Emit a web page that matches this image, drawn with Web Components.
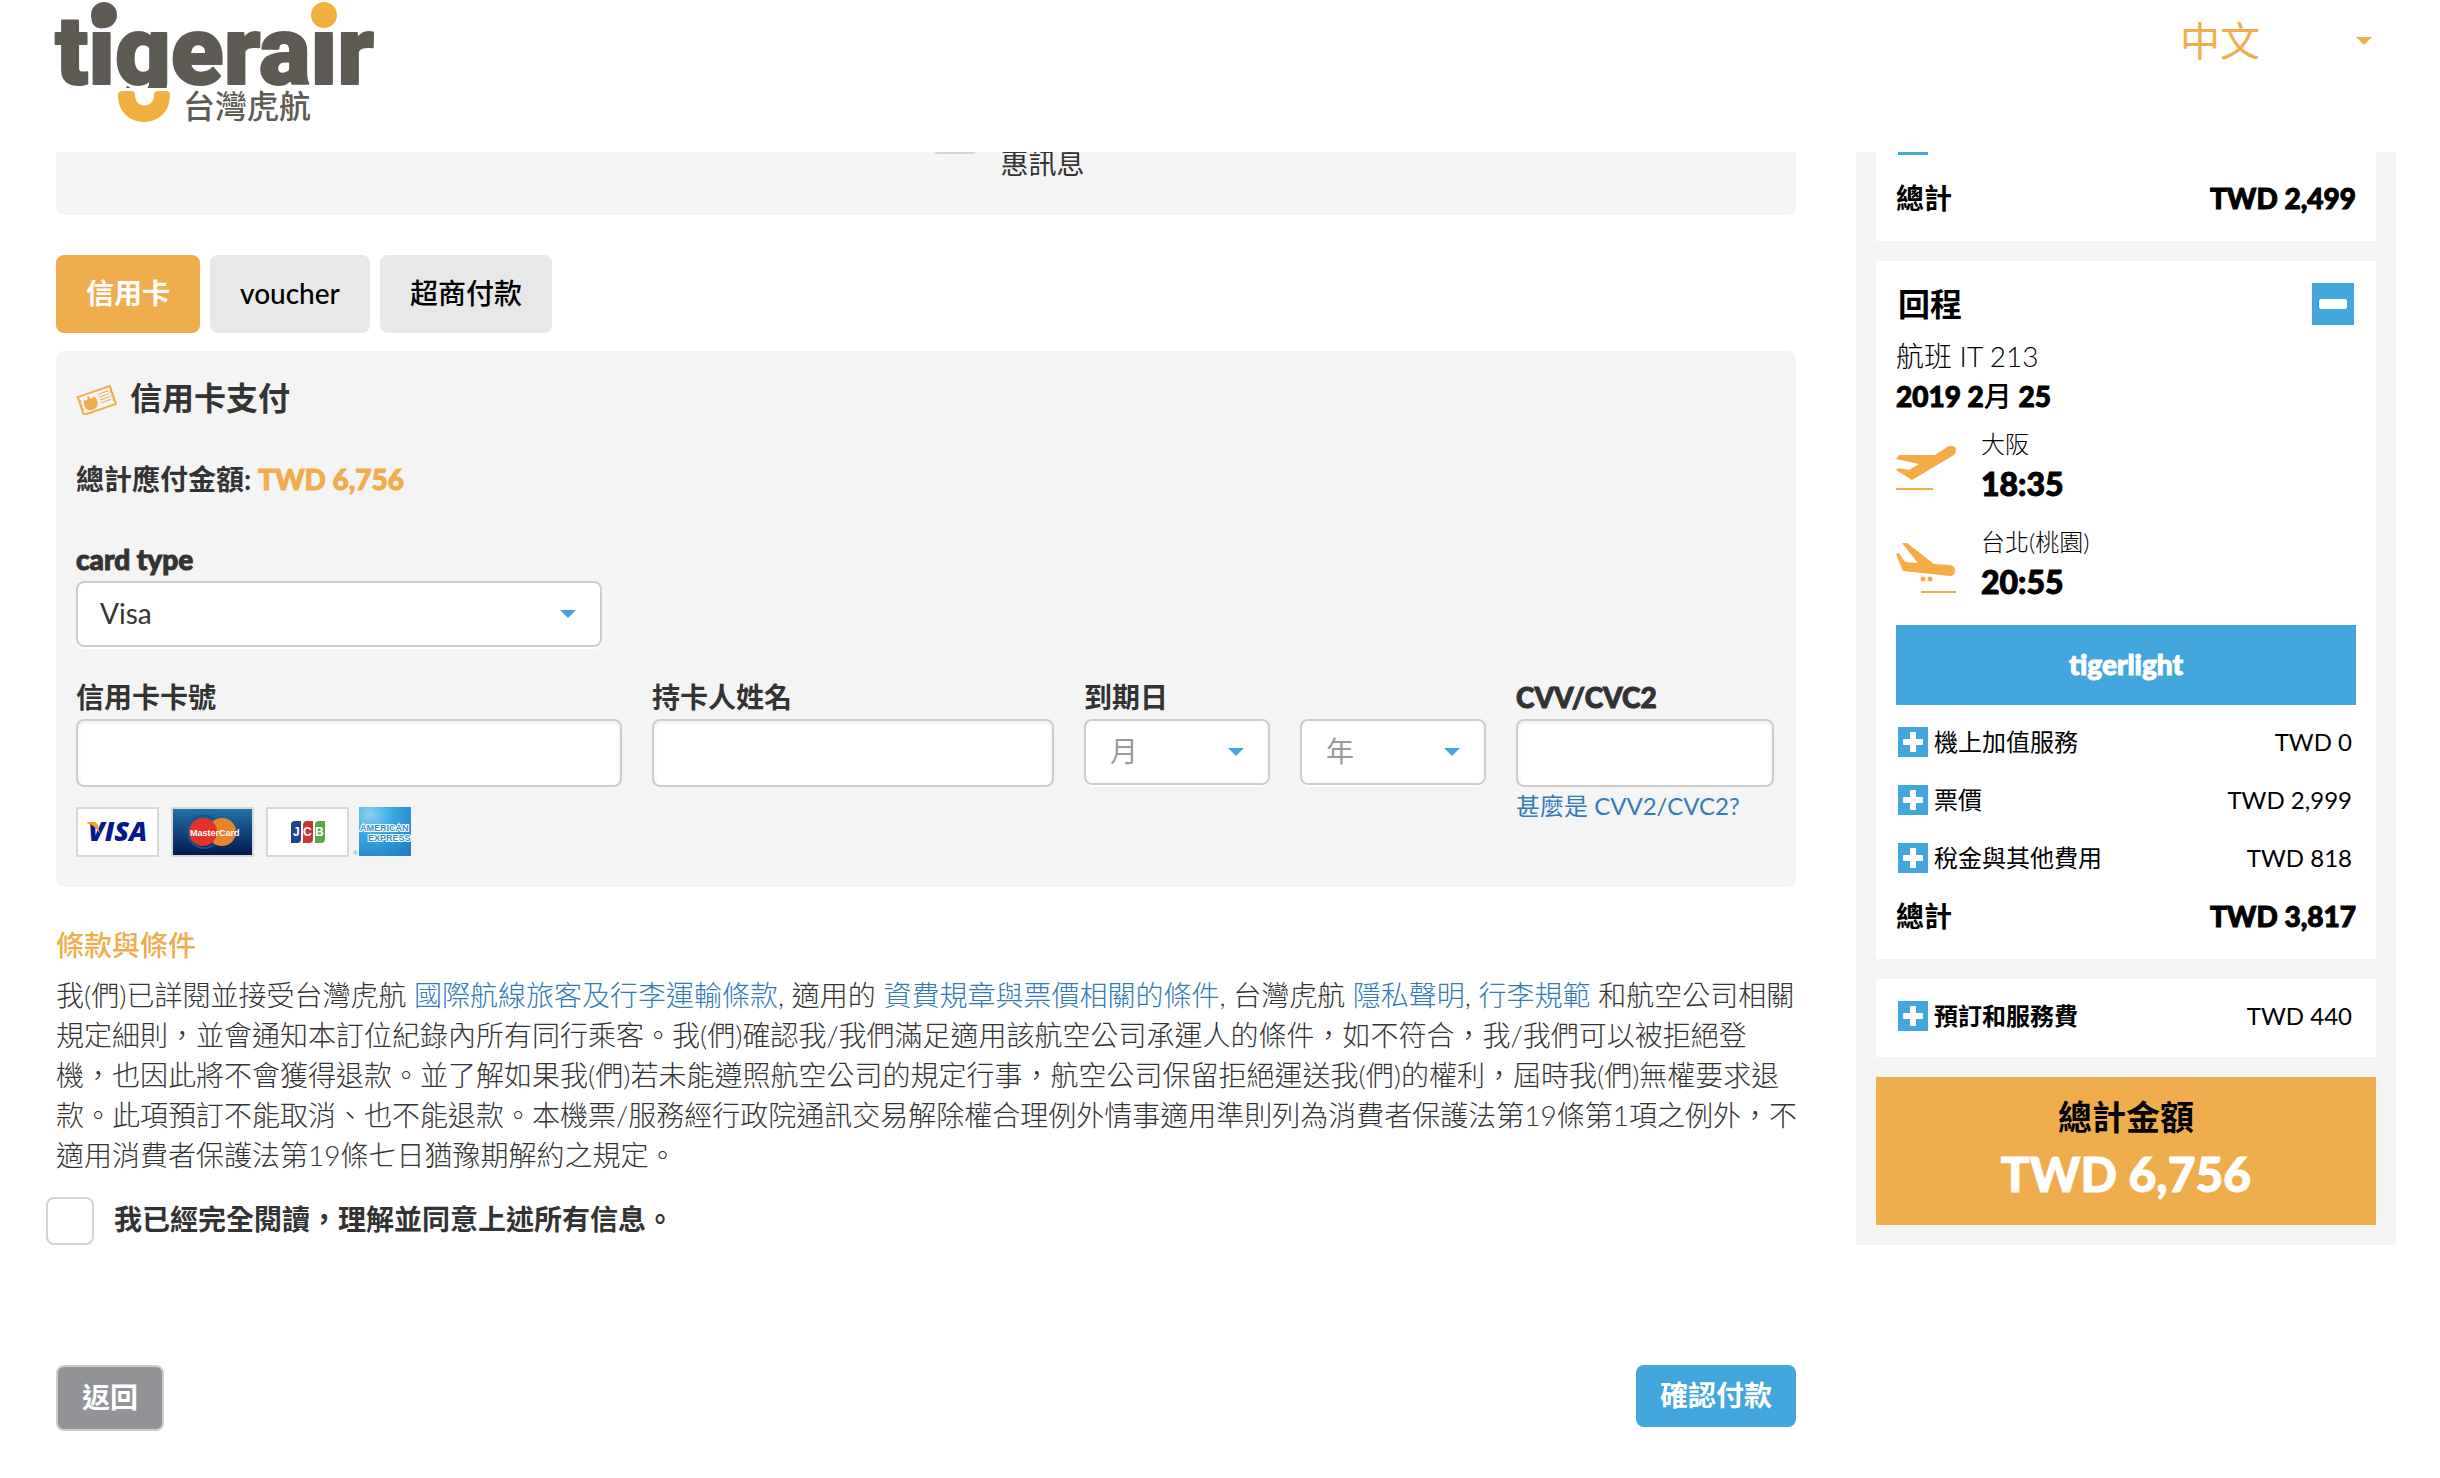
<!DOCTYPE html>
<html lang="zh-Hant">
<head>
<meta charset="utf-8">
<meta name="viewport" content="width=device-width, initial-scale=1">
<title>tigerair 台灣虎航</title>
<style>
  html { --orange: #f0ad4e; --blue: #43a7dd; --link: #337ab7; --panel: #f4f4f4; --line: #ccc; --ink: #333; }
  body { margin: 0; background: #fff; color: var(--ink); font: 400 28px/40px Lato, "Noto Sans CJK TC", sans-serif; }
  a { color: var(--link); text-decoration: none; }
</style>
</head>
<body>
<tiger-page>
  <tiger-header slot="header"></tiger-header>

  <tiger-consent slot="main"></tiger-consent>
  <pay-tabs slot="main"></pay-tabs>
  <card-form slot="main"></card-form>
  <terms-block slot="main">我(們)已詳閱並接受台灣虎航 <a href="#carriage">國際航線旅客及行李運輸條款</a>, 適用的 <a href="#fares">資費規章與票價相關的條件</a>, 台灣虎航 <a href="#privacy">隱私聲明</a>, <a href="#baggage">行李規範</a> 和航空公司相關規定細則，並會通知本訂位紀錄內所有同行乘客。我(們)確認我/我們滿足適用該航空公司承運人的條件，如不符合，我/我們可以被拒絕登<br>機，也因此將不會獲得退款。並了解如果我(們)若未能遵照航空公司的規定行事，航空公司保留拒絕運送我(們)的權利，屆時我(們)無權要求退款。此項預訂不能取消、也不能退款。本機票/服務經行政院通訊交易解除權合理例外情事適用準則列為消費者保護法第19條第1項之例外，不適用消費者保護法第19條七日猶豫期解約之規定。</terms-block>
  <page-actions slot="main"></page-actions>

  <summary-card slot="aside" clipped>
    <fare-row open-icon></fare-row>
    <fare-row total label="總計" amount="TWD 2,499"></fare-row>
  </summary-card>
  <summary-card slot="aside">
    <flight-info></flight-info>
    <fare-row open-icon label="機上加值服務" amount="TWD 0"></fare-row>
    <fare-row open-icon label="票價" amount="TWD 2,999"></fare-row>
    <fare-row open-icon label="稅金與其他費用" amount="TWD 818"></fare-row>
    <fare-row total label="總計" amount="TWD 3,817"></fare-row>
  </summary-card>
  <summary-card slot="aside" compact>
    <fare-row open-icon strong label="預訂和服務費" amount="TWD 440"></fare-row>
  </summary-card>
  <grand-total slot="aside" label="總計金額" amount="TWD 6,756"></grand-total>
</tiger-page>

<script>
const base = `*,:host{box-sizing:border-box} :host{display:block} button,input,select{font:inherit;margin:0}
  a{color:var(--link);text-decoration:none}
  .heavy{font-weight:900;-webkit-text-stroke:1px currentColor}`;

function define(name, render) {
  customElements.define(name, class extends HTMLElement {
    constructor() {
      super();
      this.attachShadow({ mode: 'open' });
    }
    connectedCallback() {
      const t = document.createElement('template');
      t.innerHTML = render(this);
      this.shadowRoot.replaceChildren(t.content.cloneNode(true));
    }
  });
}
const attr = (el, n) => el.getAttribute(n) || '';

define('tiger-page', () => `<style>${base}
  .cols{display:grid;grid-template-columns:minmax(0,1fr) 540px;gap:60px;align-items:start;padding:0 44px 0 56px}
  aside{display:flex;flex-direction:column;gap:20px;background:var(--panel);padding:0 20px 20px}
</style>
<slot name="header"></slot>
<div class="cols"><main><slot name="main"></slot></main><aside><slot name="aside"></slot></aside></div>`);

define('tiger-header', () => `<style>${base}
  header{display:flex;justify-content:space-between;align-items:flex-start;height:152px;padding:0 68px 0 56px}
  svg{display:block;overflow:visible}
  tiger-select{width:192px;margin-top:17px}
</style>
<header>
  <svg width="324" height="140" viewBox="56 0 324 140" role="img" aria-label="tigerair 台灣虎航">
    <text x="55" y="84" font-family="Roboto" font-weight="900" font-size="97" fill="#5d5b54" stroke="#5d5b54" stroke-width="2" stroke-linejoin="round">tigerair</text>
    <path d="M112 88H180V120H112Z" fill="#fff"/>
    <circle cx="104" cy="15" r="13" fill="#5d5b54"/>
    <path d="M309 0H340V30H309Z" fill="#fff"/>
    <circle cx="324" cy="15" r="13" fill="#f2b041"/>
    <path d="M123 91h8q4 0 4 4c0 14 19 14 19 0q0-4 4-4h8q4 0 4 4c0 36-52 36-52 0q0-4 5-4z" fill="#f2b041"/>
    <text x="183" y="118" font-family="Noto Sans CJK TC" font-weight="500" font-size="32" fill="#5d5b54">台灣虎航</text>
  </svg>
  <tiger-select plain label="語言" options="中文"></tiger-select>
</header>`);

define('tiger-select', el => `<style>${base}
  .box{display:grid;align-items:center}
  .box::after{content:"";grid-area:1/1;justify-self:end;width:16px;height:8px;margin-right:26px;background:var(--blue);clip-path:polygon(0 0,100% 0,50% 100%);pointer-events:none}
  select{grid-area:1/1;appearance:none;width:100%;height:66px;padding:0 22px 2px;background:#fff;border:2px solid var(--line);border-radius:8px;color:var(--ink);box-shadow:0 2px 0 #fff}
  :host([muted]) select{color:#999;padding-left:24px}
  :host([plain]) select{height:48px;border:0;padding:0;font-size:40px;line-height:48px;color:var(--orange);background:none;box-shadow:none}
  :host([plain]) .box::after{margin-right:0;background:var(--orange)}
</style>
<div class="box"><select aria-label="${attr(el, 'label')}">${attr(el, 'options').split(',').map(o => `<option>${o}</option>`).join('')}</select></div>`);

define('form-field', el => `<style>${base}
  label{display:block;font-weight:700;white-space:nowrap;min-height:40px;margin-bottom:2px}
  input{display:block;width:100%;height:68px;padding:0 24px;background:#fff;border:2px solid var(--line);border-radius:8px;box-shadow:inset 0 2px 4px #00000014}
</style>
<label class="${/^[ -~]+$/.test(attr(el, 'label')) ? 'heavy' : ''}" for="f">${attr(el, 'label')}</label>
${el.hasAttribute('custom') ? '' : '<input id="f" type="text">'}<slot></slot>`);

define('tiger-check', () => `<style>${base}
  :host{display:flex}
  input{appearance:none;width:48px;height:48px;background:#fff;border:2px solid #ced4da;border-radius:8px}
</style><input type="checkbox" aria-label="同意">`);

define('tiger-consent', () => `<style>${base}
  .bar{display:flex;align-items:flex-end;gap:22px;height:63px;overflow:hidden;background:var(--panel);border-radius:0 0 8px 8px}
  .bar::before{content:"";flex:0 0 49%}
  tiger-check{margin-bottom:61px}
  label{padding-bottom:32px}
</style>
<div class="bar"><tiger-check></tiger-check><label>惠訊息</label></div>`);

define('pay-tabs', () => `<style>${base}
  nav{display:flex;gap:10px;margin:40px 0 18px}
  button{height:78px;padding:0 30px 2px;border:0;border-radius:8px;background:#e8e8e8;color:#000;font-weight:500}
  .on{background:var(--orange);color:#fff;font-weight:700}
</style>
<nav><button class="on">信用卡</button><button>voucher</button><button>超商付款</button></nav>`);

define('card-logos', () => `<style>${base}
  svg{display:block}
</style>
<svg width="335" height="50" viewBox="0 0 335 50" role="img" aria-label="VISA MasterCard JCB American Express" font-family="Liberation Sans" font-weight="700">
  <defs>
    <linearGradient id="m" x2="0" y2="1"><stop stop-color="#1f74ab"/><stop offset="1" stop-color="#03174c"/></linearGradient>
    <radialGradient id="a" cx=".2" cy=".15" r="1"><stop stop-color="#8ad1f3"/><stop offset=".45" stop-color="#36a9e1"/><stop offset="1" stop-color="#2380c6"/></radialGradient>
  </defs>
  <path d="M1 1H82V49H1Z" fill="#fff" stroke="#d6d8d9" stroke-width="2"/>
  <text x="12" y="34" font-family="Open Sans" font-size="27" font-weight="800" font-style="italic" fill="#06178f">VISA</text>
  <path d="M11 15h7q3 0 4 4l2 8q-4-8-13-11z" fill="#f4a024"/>
  <path d="M96 1H177V49H96Z" fill="url(#m)" stroke="#d6d8d9" stroke-width="2"/>
  <circle cx="128" cy="25" r="16" fill="none" stroke="#14538c" stroke-width="2"/>
  <circle cx="146" cy="25" r="14" fill="#e8852c"/><circle cx="127" cy="25" r="14" fill="#e5332a"/>
  <text x="114" y="29" font-size="9" fill="#fff">MasterCard</text>
  <path d="M191 1H272V49H191Z" fill="#fff" stroke="#d6d8d9" stroke-width="2"/>
  <path d="M219 14h6v18q0 4-4 4h-6v-18q0-4 4-4z" fill="#20458a"/>
  <path d="M231 14h6v18q0 4-4 4h-6v-18q0-4 4-4z" fill="#cd3236"/>
  <path d="M243 14h6v18q0 4-4 4h-6v-18q0-4 4-4z" fill="#5aa64b"/>
  <g font-size="12" fill="#fff"><text x="217" y="29">J</text><text x="227" y="29">C</text><text x="239" y="29">B</text></g>
  <text x="277" y="48" font-size="6" fill="#6eb2dc">®</text>
  <path d="M283 0H335V49H283Z" fill="url(#a)"/>
  <g font-size="9" fill="#2f93d1" stroke="#fff" stroke-width="2" paint-order="stroke"><text x="284" y="24">AMERICAN</text><text x="292" y="34">EXPRESS</text></g>
</svg>`);

define('card-form', () => `<style>${base}
  section{background:var(--panel);border-radius:8px;padding:27px 22px 30px 20px}
  h2{display:flex;align-items:center;gap:12px;margin:0;font-size:32px;line-height:40px;font-weight:700}
  p{margin:41px 0 40px;font-weight:700}
  strong{color:var(--orange)}
  .type{width:526px;max-width:100%;margin-bottom:30px}
  .row{display:grid;grid-template-columns:546fr 402fr 186fr 186fr 258fr;gap:30px}
  card-logos{margin-top:20px}
  .help{display:block;font-size:24px;line-height:32px;margin-top:3px;white-space:nowrap}
</style>
<section>
  <h2><svg width="42" height="34" viewBox="0 0 42 34" fill="none" stroke="#f0ad4e" stroke-width="2" aria-hidden="true">
    <g transform="rotate(-19 21 20)"><path d="M4 10H38V15q-2 1 0 2v2q-2 1 0 2v2q-2 1 0 2v4H4v-5q2-1 0-2v-2q2-1 0-2v-2q2-1 0-2z"/>
    <path d="M24 14h11M24 17h11M24 20h11M24 23h11" stroke-width="1"/><path d="M9 15l3 1 2-4 2 4 4-1c3 5 1 12-5 12-7 0-9-6-6-12z" fill="#f0ad4e" stroke="none"/></g></svg>信用卡支付</h2>
  <p>總計應付金額: <strong class="heavy">TWD 6,756</strong></p>
  <form-field class="type" label="card type" custom><tiger-select label="card type" options="Visa,MasterCard,JCB"></tiger-select></form-field>
  <div class="row">
    <form-field label="信用卡卡號"><card-logos></card-logos></form-field>
    <form-field label="持卡人姓名"></form-field>
    <form-field label="到期日" custom><tiger-select muted label="月" options="月"></tiger-select></form-field>
    <form-field label="" custom><tiger-select muted label="年" options="年"></tiger-select></form-field>
    <form-field label="CVV/CVC2"><a class="help" href="#cvv">甚麼是 CVV2/CVC2?</a></form-field>
  </div>
</section>`);

define('terms-block', () => `<style>${base}
  h3{margin:38px 0 10px;font-size:28px;line-height:40px;font-weight:500;color:var(--orange)}
  p{margin:0 -8px 0 0;font-weight:300}
  .agree{display:flex;align-items:flex-start;gap:20px;margin:22px 0 0 -10px}
  input{appearance:none;flex:none;width:48px;height:48px;margin:0;background:#fff;border:2px solid #ced4da;border-radius:8px}
  label{font-weight:700;line-height:44px}
</style>
<h3>條款與條件</h3><p><slot></slot></p>
<div class="agree"><input type="checkbox" id="ok"><label for="ok">我已經完全閱讀，理解並同意上述所有信息。</label></div>`);

define('page-actions', () => `<style>${base}
  div{display:flex;justify-content:space-between;align-items:flex-start;margin-top:120px}
  button{height:62px;padding:0 24px 2px;border:0;border-radius:8px;background:var(--blue);color:#fff;font-weight:700}
  .back{height:66px;border:2px solid var(--line);background:#929397}
</style>
<div><button class="back">返回</button><button>確認付款</button></div>`);

define('summary-card', () => `<style>${base}
  :host{background:#fff;padding:22px 20px 14px;color:#000}
  :host([compact]){padding:8px 20px 12px}
  :host([clipped]){display:flex;flex-direction:column;justify-content:flex-end;height:89px;padding-top:0;overflow:hidden}
</style><slot></slot>`);

define('square-button', el => `<style>${base}
  button{display:grid;place-items:center;width:30px;height:30px;padding:0;border:0;background:var(--blue)}
  svg{display:block}
  :host([minus]) button{width:42px;height:42px}
</style>
<button aria-label="${el.hasAttribute('minus') ? '收合' : '展開'}">${el.hasAttribute('minus')
  ? '<svg width="28" height="10"><rect width="28" height="10" rx="2" fill="#fff"/></svg>'
  : '<svg width="20" height="20" fill="#fff"><rect x="7" width="6" height="20" rx="1"/><rect y="7" width="20" height="6" rx="1"/></svg>'}</button>`);

define('fare-row', el => `<style>${base}
  :host{display:flex;flex:none;align-items:center;height:58px;font-size:24px;padding:0 4px 0 2px}
  .l{flex:1;padding-left:6px}
  :host([strong]) .l{font-weight:700}
  :host([total]){font-size:28px;padding:0}
  :host([total]) .l{padding:0;font-weight:700}
</style>
${el.hasAttribute('open-icon') ? '<square-button></square-button>' : ''}<span class="l">${attr(el, 'label')}</span><span class="${el.hasAttribute('total') ? 'heavy' : ''}">${attr(el, 'amount')}</span>`);

define('flight-leg', el => `<style>${base}
  :host{display:flex;gap:25px}
  svg{flex:none;width:60px;height:50px;margin-top:21px;fill:#f6ab45}
  .c{font-size:24px;font-weight:300}
  .t{font-size:32px}
</style>
${el.hasAttribute('landing')
  ? '<svg viewBox="0 0 60 50"><path d="M6 0h5l27 21 16 1q5 1 5 5 0 6-5 6L7 28 0 11l3-1 6 9 13 1z"/><circle cx="27" cy="36" r="2.5"/><circle cx="34" cy="36" r="2.5"/><path d="M25 48H60v2H25z"/></svg>'
  : '<svg viewBox="0 0 60 50"><path d="M0 14l3-4 36 0L53 1q5-1 7 3 0 4-2 6L16 35 0 25l2-2 11 2 10-6z"/><path d="M0 43H37v2H0z"/></svg>'}
<div><div class="c">${attr(el, 'city')}</div><div class="t heavy">${attr(el, 'time')}</div></div>`);

define('flight-info', () => `<style>${base}
  :host{margin-bottom:8px}
  .head{display:flex;justify-content:space-between;align-items:center;padding:0 2px;height:42px}
  h3{margin:0;font-size:32px;line-height:40px;font-weight:700}
  .no{margin-top:11px;font-weight:300}
  .date{margin-bottom:8px}
  .date span{font-weight:500;-webkit-text-stroke:0}
  .second{margin-top:18px}
  .fare{margin-top:23px;height:80px;padding-bottom:2px;display:grid;place-items:center;background:var(--blue);color:#fff}
</style>
<div class="head"><h3>回程</h3><square-button minus></square-button></div>
<div class="no">航班 IT 213</div>
<div class="date heavy">2019 2<span>月</span> 25</div>
<flight-leg city="大阪" time="18:35"></flight-leg>
<flight-leg class="second" landing city="台北(桃園)" time="20:55"></flight-leg>
<div class="fare heavy">tigerlight</div>`);

define('grand-total', el => `<style>${base}
  :host{background:var(--orange);text-align:center;padding:20px 20px 21px;color:#000}
  .l{font-size:34px;line-height:40px;font-weight:700}
  .a{margin-top:7px;font-size:48px;line-height:60px;color:#fff}
</style><div class="l">${attr(el, 'label')}</div><div class="a heavy">${attr(el, 'amount')}</div>`);
</script>
</body>
</html>
